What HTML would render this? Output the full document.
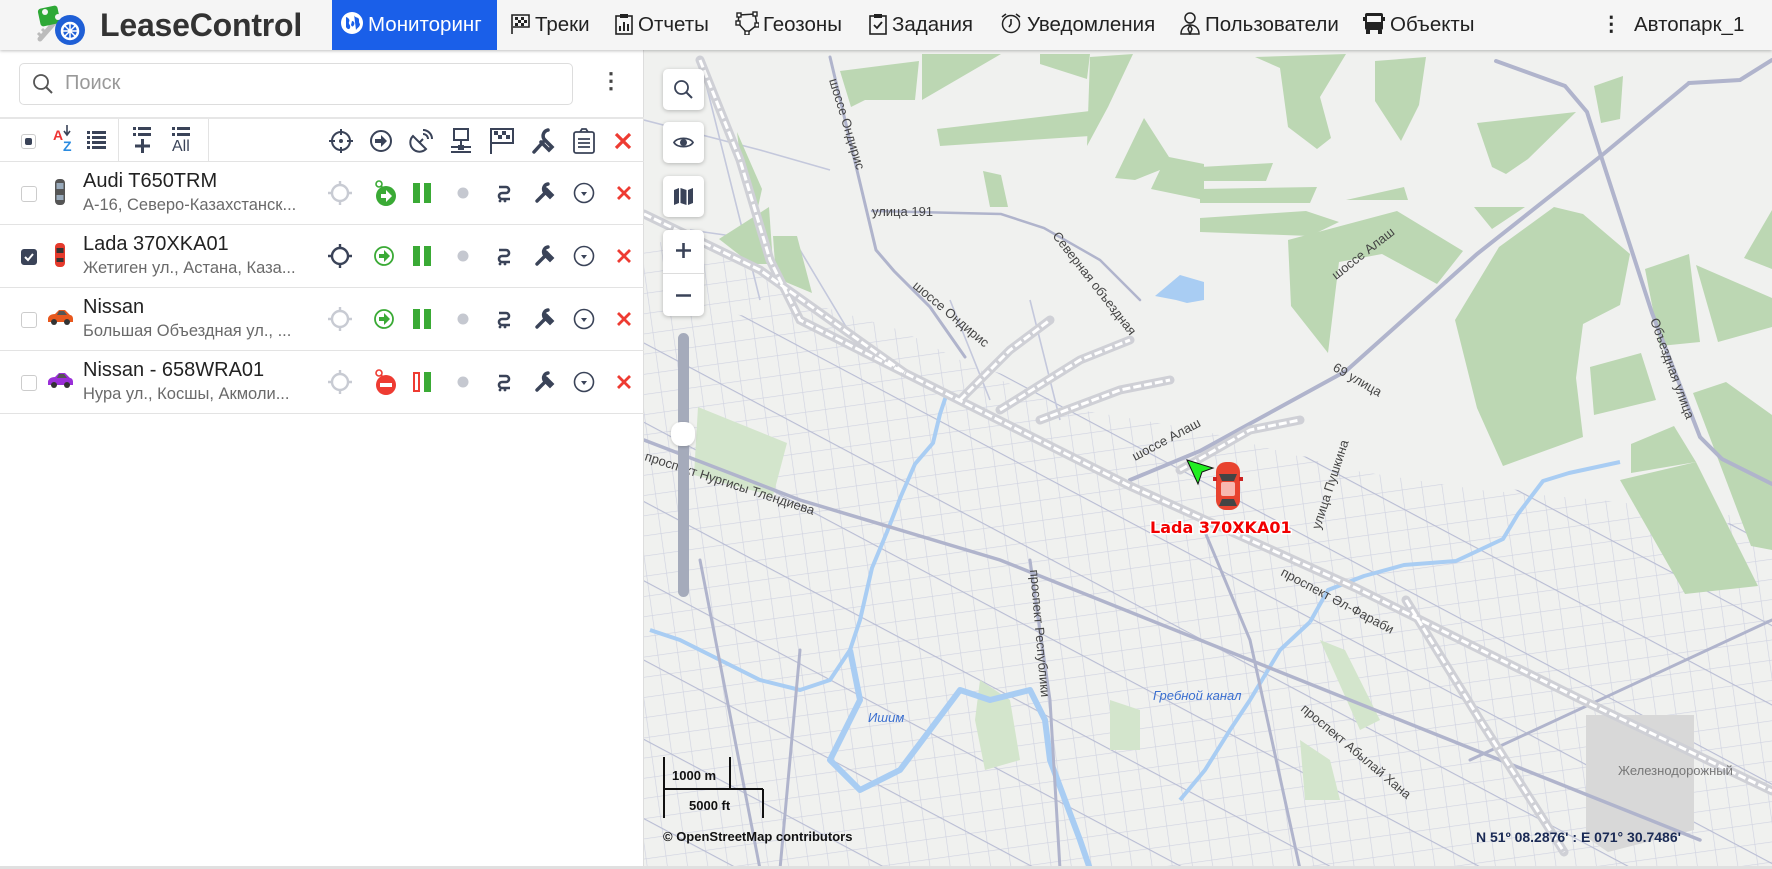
<!DOCTYPE html>
<html><head><meta charset="utf-8">
<style>
*{box-sizing:border-box;margin:0;padding:0}
body{width:1772px;height:869px;overflow:hidden;font-family:"Liberation Sans",Arial,sans-serif;background:#fff;position:relative}
.abs{position:absolute}
#hdr{left:0;top:0;width:1772px;height:50px;background:#f5f5f5;box-shadow:0 1px 3px rgba(0,0,0,.25);z-index:5}
.mi{position:absolute;top:0;height:50px;line-height:50px;font-size:20.5px;color:#222;white-space:nowrap}
.mi svg{vertical-align:-4px;margin-right:4px}
#side{left:0;top:50px;width:644px;height:819px;background:#fff;border-right:1px solid #ddd}
.row{position:absolute;left:0;width:644px;height:63px;border-bottom:1px solid #e3e3e3}
.cb{position:absolute;left:21px;top:24px;width:16px;height:16px;border:1px solid #ccc;border-radius:3px;background:#fff}
.nm{position:absolute;left:83px;top:8px;font-size:20px;color:#222}
.ad{position:absolute;left:83px;top:34px;font-size:16.5px;color:#6a6a6a}
#map{left:644px;top:50px;width:1128px;height:819px;background:#f0f1ef;overflow:hidden}
.btn{position:absolute;left:19px;width:41px;height:41px;background:#fff;border-radius:5px;box-shadow:0 1px 4px rgba(0,0,0,.25)}
.btn svg{position:absolute;left:10px;top:10px}
</style></head><body>

<div id="hdr" class="abs">
  <svg class="abs" style="left:32px;top:3px" width="56" height="44" viewBox="0 0 56 44">
    <path d="M8 36 L22 20" stroke="#bbb" stroke-width="5" stroke-linecap="round"/>
    <path d="M6 30 l4 4 M10 26 l4 4" stroke="#bbb" stroke-width="3"/>
    <rect x="7" y="4" width="20" height="18" rx="3" fill="#2ea836" transform="rotate(-12 17 13)"/>
    <circle cx="13" cy="9" r="3" fill="#f5f5f5"/>
    <circle cx="38" cy="27" r="15" fill="#1f5fd6"/>
    <circle cx="38" cy="28" r="8" fill="none" stroke="#fff" stroke-width="2.5"/>
    <path d="M38 20v16M30 28h16M32.5 22.5l11 11M43.5 22.5l-11 11" stroke="#fff" stroke-width="1.5"/>
    <circle cx="26" cy="14" r="3" fill="#f5f5f5"/>
  </svg>
  <div class="abs" style="left:100px;top:7px;font-size:32px;font-weight:bold;color:#333;letter-spacing:-.2px">LeaseControl</div>
  <div class="abs" style="left:332px;top:0;width:165px;height:50px;background:#1a5fe9"></div>
  <div class="mi" style="left:340px;color:#fff">
    <svg width="24" height="24" viewBox="0 0 24 24"><circle cx="12" cy="12" r="11" fill="#fff"/><path d="M6 6c3 1 4 3 3 5s2 3 1 6c-1 2-3 1-4-1M14 3c0 3 2 3 4 4s0 4 2 6c0 3-3 4-4 6" fill="#1a5fe9"/><path d="M12 10c2 0 3 2 2 4s-2 2-3 0" fill="#1a5fe9"/></svg>Мониторинг</div>
  <div class="mi" style="left:509px"><svg width="22" height="22" viewBox="0 0 22 22"><path d="M3 21V2h17v12H4" fill="none" stroke="#222" stroke-width="1.6"/><path d="M6 4h3v3H6zM12 4h3v3h-3zM9 7h3v3H9zM15 7h3v3h-3zM6 10h3v3H6zM12 10h3v3h-3z" fill="#222"/></svg>Треки</div>
  <div class="mi" style="left:614px"><svg width="20" height="22" viewBox="0 0 20 22"><rect x="2" y="3" width="16" height="18" fill="none" stroke="#222" stroke-width="1.6"/><rect x="6" y="1" width="8" height="4" fill="#222"/><path d="M6 18v-5M10 18V9M14 18v-7" stroke="#222" stroke-width="2"/></svg>Отчеты</div>
  <div class="mi" style="left:735px"><svg width="24" height="24" viewBox="0 0 24 24"><path d="M4 4L20 3L22 14L12 22L3 12Z" fill="none" stroke="#222" stroke-width="1.5"/><g fill="#fff" stroke="#222" stroke-width="1.4"><rect x="2" y="2" width="4" height="4"/><rect x="18" y="1" width="4" height="4"/><rect x="20" y="12" width="4" height="4"/><rect x="10" y="20" width="4" height="4"/><rect x="1" y="10" width="4" height="4"/></g></svg>Геозоны</div>
  <div class="mi" style="left:868px"><svg width="20" height="22" viewBox="0 0 20 22"><rect x="2" y="3" width="16" height="18" fill="none" stroke="#222" stroke-width="1.6"/><rect x="6" y="1" width="8" height="4" fill="#222"/><path d="M6 12l3 3 5-6" fill="none" stroke="#222" stroke-width="1.8"/></svg>Задания</div>
  <div class="mi" style="left:999px"><svg width="24" height="24" viewBox="0 0 24 24"><circle cx="12" cy="13" r="8.5" fill="none" stroke="#222" stroke-width="1.5"/><path d="M12 8v5l-2 3M3 6l4-3M21 6l-4-3" fill="none" stroke="#222" stroke-width="1.6"/></svg>Уведомления</div>
  <div class="mi" style="left:1179px"><svg width="22" height="24" viewBox="0 0 22 24"><circle cx="11" cy="7" r="5" fill="none" stroke="#222" stroke-width="1.5"/><path d="M2 23c0-6 4-9 9-9s9 3 9 9zM11 14l-2 4 2 5 2-5z" fill="none" stroke="#222" stroke-width="1.5"/></svg>Пользователи</div>
  <div class="mi" style="left:1362px"><svg width="24" height="24" viewBox="0 0 24 24"><rect x="3" y="2" width="18" height="17" rx="2" fill="#222"/><rect x="5" y="5" width="14" height="6" fill="#f5f5f5"/><rect x="4" y="19" width="4" height="4" fill="#222"/><rect x="16" y="19" width="4" height="4" fill="#222"/><rect x="1" y="6" width="2" height="4" fill="#222"/><rect x="21" y="6" width="2" height="4" fill="#222"/></svg>Объекты</div>
  <div class="mi" style="left:1601px;font-weight:bold">⋮</div>
  <div class="mi" style="left:1634px">Автопарк_1</div>
</div>

<div id="side" class="abs">
  <div class="abs" style="left:19px;top:13px;width:554px;height:42px;border:1px solid #ddd;border-radius:5px"></div>
  <svg class="abs" style="left:32px;top:23px" width="22" height="22" viewBox="0 0 22 22"><circle cx="9" cy="9" r="7" fill="none" stroke="#555" stroke-width="1.8"/><path d="M14 14l6 6" stroke="#555" stroke-width="2"/></svg>
  <div class="abs" style="left:65px;top:22px;font-size:20px;color:#999">Поиск</div>
  <div class="abs" style="left:600px;top:18px;font-size:22px;color:#444;font-weight:bold">⋮</div>
  <div class="abs" style="left:0;top:67px;width:644px;height:2px;background:#e6e6e6"></div>
  <div class="abs" style="left:0;top:69px;width:644px;height:43px;border-bottom:1px solid #e3e3e3"></div>
  <div class="abs" style="left:21px;top:84px;width:15px;height:15px;border:1px solid #ccc;border-radius:3px"></div>
  <div class="abs" style="left:25px;top:88px;width:7px;height:7px;border-radius:2px;background:#3a4358"></div>
  <div class="abs" style="left:53px;top:77px;font-size:14px;color:#e33;font-weight:bold">A</div>
  <div class="abs" style="left:63px;top:88px;font-size:14px;color:#2b8be0;font-weight:bold">Z</div>
  <svg class="abs" style="left:63px;top:75px" width="8" height="12"><path d="M4 0v9M1 6l3 4 3-4" stroke="#3a4358" stroke-width="1.6" fill="none"/></svg>
  <svg class="abs" style="left:87px;top:80px" width="20" height="20" viewBox="0 0 20 20"><g fill="#3a4358"><rect x="0" y="1" width="3" height="3"/><rect x="5" y="1" width="14" height="3"/><rect x="0" y="6" width="3" height="3"/><rect x="5" y="6" width="14" height="3"/><rect x="0" y="11" width="3" height="3"/><rect x="5" y="11" width="14" height="3"/><rect x="0" y="16" width="3" height="3"/><rect x="5" y="16" width="14" height="3"/></g></svg>
  <div class="abs" style="left:118px;top:69px;width:1px;height:43px;background:#e3e3e3"></div>
  <svg class="abs" style="left:133px;top:76px" width="20" height="28" viewBox="0 0 20 28"><g fill="#3a4358"><rect x="0" y="1" width="3" height="3"/><rect x="5" y="1" width="13" height="3"/><rect x="0" y="7" width="3" height="3"/><rect x="5" y="7" width="13" height="3"/><rect x="8" y="13" width="3" height="14"/><rect x="2" y="18.5" width="15" height="3"/></g></svg>
  <svg class="abs" style="left:172px;top:76px" width="20" height="12" viewBox="0 0 20 12"><g fill="#3a4358"><rect x="0" y="1" width="3" height="3"/><rect x="5" y="1" width="13" height="3"/><rect x="0" y="7" width="3" height="3"/><rect x="5" y="7" width="13" height="3"/></g></svg>
  <div class="abs" style="left:172px;top:88px;font-size:16px;color:#3a4358">All</div>
  <div class="abs" style="left:208px;top:69px;width:1px;height:43px;background:#e3e3e3"></div>
  <svg class="abs" style="left:328px;top:78px" width="26" height="26" viewBox="0 0 26 26"><circle cx="13" cy="13" r="9" fill="none" stroke="#3a4358" stroke-width="2"/><circle cx="13" cy="13" r="2" fill="#3a4358"/><path d="M13 1v6M13 19v6M1 13h6M19 13h6" stroke="#3a4358" stroke-width="2"/></svg>
  <svg class="abs" style="left:369px;top:79px" width="24" height="24" viewBox="0 0 24 24"><circle cx="12" cy="12" r="10" fill="none" stroke="#3a4358" stroke-width="2"/><path d="M6 10h6V6l6 6-6 6v-4H6z" fill="#3a4358"/></svg>
  <svg class="abs" style="left:408px;top:78px" width="26" height="26" viewBox="0 0 26 26"><path d="M5 8a9 9 0 0 0 13 13z" fill="none" stroke="#3a4358" stroke-width="2"/><path d="M11 15l4-4M15 6a5 5 0 0 1 5 5M15 2a9 9 0 0 1 9 9" fill="none" stroke="#3a4358" stroke-width="2"/></svg>
  <svg class="abs" style="left:449px;top:78px" width="24" height="26" viewBox="0 0 24 26"><rect x="5" y="1" width="14" height="11" fill="none" stroke="#3a4358" stroke-width="2"/><path d="M12 12v6M2 19h20M2 24h20" stroke="#3a4358" stroke-width="2"/><rect x="9" y="17" width="6" height="5" fill="#3a4358"/></svg>
  <svg class="abs" style="left:489px;top:77px" width="26" height="28" viewBox="0 0 26 28"><path d="M2 27V2h22v14H3" fill="none" stroke="#3a4358" stroke-width="2"/><path d="M5 4h4v4H5zM13 4h4v4h-4zM9 8h4v4H9zM17 8h4v4h-4z" fill="#3a4358"/></svg>
  <svg class="abs" style="left:531px;top:78px" width="24" height="26" viewBox="0 0 24 26"><path d="M3 24l10-11M17 2a6 6 0 0 0-4 9l8 8-3 3-8-8" fill="none" stroke="#3a4358" stroke-width="3.5" stroke-linecap="round"/></svg>
  <svg class="abs" style="left:572px;top:77px" width="24" height="28" viewBox="0 0 24 28"><rect x="2" y="5" width="20" height="21" rx="2" fill="none" stroke="#3a4358" stroke-width="1.8"/><path d="M8 5l2-3h4l2 3M6 12h12M6 16h12M6 20h12" fill="none" stroke="#3a4358" stroke-width="1.8"/></svg>
  <svg class="abs" style="left:614px;top:82px" width="18" height="18" viewBox="0 0 18 18"><path d="M2 2l14 14M16 2L2 16" stroke="#ee3b32" stroke-width="3.2"/></svg>

  <div class="row" style="top:112px">
    <div class="cb"></div>
    <svg class="abs" style="left:53px;top:16px" width="14" height="28" viewBox="0 0 14 28"><rect x="2" y="1" width="10" height="26" rx="4" fill="#555"/><rect x="3.5" y="5" width="7" height="6" fill="#9ab"/><rect x="3.5" y="17" width="7" height="5" fill="#9ab"/></svg>
    <div class="nm">Audi T650TRM</div><div class="ad">A-16, Северо-Казахстанск...</div>
  </div>
  <div class="row" style="top:175px">
    <div class="cb" style="background:#3a4358;border-color:#3a4358"><svg width="14" height="14" viewBox="0 0 14 14" style="position:absolute;left:0;top:0"><path d="M3 7l3 3 5-6" stroke="#fff" stroke-width="2" fill="none"/></svg></div>
    <svg class="abs" style="left:53px;top:17px" width="14" height="26" viewBox="0 0 14 26"><rect x="2" y="1" width="10" height="24" rx="4" fill="#e53a2c"/><rect x="3.5" y="6" width="7" height="5" fill="#333"/><rect x="3.5" y="16" width="7" height="4" fill="#333"/></svg>
    <div class="nm">Lada 370XKA01</div><div class="ad">Жетиген ул., Астана, Каза...</div>
  </div>
  <div class="row" style="top:238px">
    <div class="cb"></div>
    <svg class="abs" style="left:47px;top:20px" width="26" height="18" viewBox="0 0 26 18"><path d="M1 11c0-3 3-5 7-5l4-4h6l5 5c2 0 3 2 3 4v3H1z" fill="#e8581e"/><circle cx="7" cy="14" r="3" fill="#333"/><circle cx="20" cy="14" r="3" fill="#333"/><path d="M12 3h5l3 4h-10z" fill="#555"/></svg>
    <div class="nm">Nissan</div><div class="ad">Большая Объездная ул., ...</div>
  </div>
  <div class="row" style="top:301px">
    <div class="cb"></div>
    <svg class="abs" style="left:47px;top:20px" width="26" height="18" viewBox="0 0 26 18"><path d="M1 11c0-3 3-5 7-5l4-4h6l5 5c2 0 3 2 3 4v3H1z" fill="#9a2fd8"/><circle cx="7" cy="14" r="3" fill="#333"/><circle cx="20" cy="14" r="3" fill="#333"/><path d="M12 3h5l3 4h-10z" fill="#555"/></svg>
    <div class="nm">Nissan - 658WRA01</div><div class="ad">Нура ул., Косшы, Акмоли...</div>
  </div>
</div>

<svg class="abs" style="left:0;top:0;z-index:3" width="644" height="420" viewBox="0 0 644 420">
  <defs>
    <g id="tgt"><circle cx="0" cy="0" r="8" fill="none" stroke-width="2.4"/><path d="M0-12v5M0 7v5M-12 0h5M7 0h5" stroke-width="2.4"/></g>
    <g id="pause"><rect x="-9" y="-10" width="7" height="20" fill="#3aaa35"/><rect x="2" y="-10" width="7" height="20" fill="#3aaa35"/></g>
    <g id="sig"><path d="M-5-6h7a3 3 0 0 1 0 6h-4a3 3 0 0 0 0 6h8" fill="none" stroke="#3a4358" stroke-width="2.6"/><circle cx="-4" cy="8" r="1.4" fill="#3a4358"/><circle cx="1" cy="8" r="1.4" fill="#3a4358"/></g>
    <g id="wr"><path d="M-7 8l8-8M4-9a5 5 0 0 0-4 7l6 6 2-2-6-6" fill="none" stroke="#3a4358" stroke-width="3.4" stroke-linecap="round"/></g>
    <g id="dd"><circle r="9.5" fill="none" stroke="#3a4358" stroke-width="1.6"/><path d="M-3-1h6l-3 4z" fill="#3a4358"/></g>
    <g id="x"><path d="M-6-6l12 12M6-6l-12 12" stroke="#ee3b32" stroke-width="2.8"/></g>
    <g id="arr"><path d="M-5-2h5v-4l6 6-6 6v-4h-5z"/></g>
  </defs>
  <use href="#tgt" x="340" y="193" stroke="#c8cbd3"/>
  <circle cx="386" cy="196" r="10" fill="#3aaa35"/><use href="#arr" x="386" y="196" fill="#fff"/>
  <circle cx="379" cy="184" r="3" fill="none" stroke="#3aaa35" stroke-width="1.6"/><path d="M381 186l3 3" stroke="#3aaa35" stroke-width="1.6"/>
  <use href="#pause" x="422" y="193"/>
  <circle cx="463" cy="193" r="5.5" fill="#c5c8d0"/>
  <use href="#sig" x="504" y="193"/><use href="#wr" x="544" y="193"/><use href="#dd" x="584" y="193"/><use href="#x" x="624" y="193"/>
  <use href="#tgt" x="340" y="256" stroke="#3a4358"/>
  <circle cx="384" cy="256" r="9" fill="none" stroke="#3aaa35" stroke-width="1.8"/><use href="#arr" x="384" y="256" fill="#3aaa35"/>
  <use href="#pause" x="422" y="256"/>
  <circle cx="463" cy="256" r="5.5" fill="#c5c8d0"/>
  <use href="#sig" x="504" y="256"/><use href="#wr" x="544" y="256"/><use href="#dd" x="584" y="256"/><use href="#x" x="624" y="256"/>
  <use href="#tgt" x="340" y="319" stroke="#c8cbd3"/>
  <circle cx="384" cy="319" r="9" fill="none" stroke="#3aaa35" stroke-width="1.8"/><use href="#arr" x="384" y="319" fill="#3aaa35"/>
  <use href="#pause" x="422" y="319"/>
  <circle cx="463" cy="319" r="5.5" fill="#c5c8d0"/>
  <use href="#sig" x="504" y="319"/><use href="#wr" x="544" y="319"/><use href="#dd" x="584" y="319"/><use href="#x" x="624" y="319"/>
  <use href="#tgt" x="340" y="382" stroke="#c8cbd3"/>
  <circle cx="386" cy="385" r="10" fill="#ee3b32"/><rect x="380" y="383" width="12" height="4" fill="#fff"/>
  <circle cx="379" cy="373" r="3" fill="none" stroke="#ee3b32" stroke-width="1.6"/><path d="M381 375l3 3" stroke="#ee3b32" stroke-width="1.6"/>
  <rect x="413" y="372" width="7" height="20" fill="#ee3b32"/><rect x="415" y="374" width="3" height="16" fill="#fff"/><rect x="424" y="372" width="7" height="20" fill="#3aaa35"/>
  <circle cx="463" cy="382" r="5.5" fill="#c5c8d0"/>
  <use href="#sig" x="504" y="382"/><use href="#wr" x="544" y="382"/><use href="#dd" x="584" y="382"/><use href="#x" x="624" y="382"/>
</svg>

<div id="map" class="abs">
<svg width="1128" height="819" viewBox="644 50 1128 819" style="position:absolute;left:0;top:0">
  <defs>
    <pattern id="grid" width="20" height="20" patternUnits="userSpaceOnUse" patternTransform="rotate(-8)">
      <path d="M0 0H20M0 0V20" stroke="#c8cbdd" stroke-width="1.3" fill="none"/>
    </pattern>
    <pattern id="grid2" width="70" height="70" patternUnits="userSpaceOnUse" patternTransform="rotate(28)">
      <path d="M0 0H70" stroke="#b9bdd4" stroke-width="2.2" fill="none"/>
    </pattern>
  </defs>
  <path d="M644 240L720 250L800 300L900 330L1000 380L1080 410L1200 430L1350 470L1480 490L1600 500L1772 520V869H644Z" fill="url(#grid)" opacity=".8"/>
  <path d="M644 300L900 340L1200 440L1772 530V869H644Z" fill="url(#grid2)"/>
  <path d="M644 120L760 150L830 170M690 230L760 240M700 60L760 300M800 250L860 350M950 300L990 400M1030 300L1060 420" stroke="#c4c8dc" stroke-width="1.6" fill="none"/>
  <g fill="#bcd7b3">
    <path d="M840 71L919 61L915 100L865 100L851 107Z"/>
    <path d="M922 54L1001 54L922 100Z"/>
    <path d="M937 129L1090 111L1090 136L940 146Z"/>
    <path d="M1040 54L1090 54L1087 79L1040 64Z"/>
    <path d="M1090 57L1133 54L1108 107L1087 146Z"/>
    <path d="M1115 178L1144 118L1169 157L1204 164L1204 200L1151 189L1160 170L1135 180Z"/>
    <path d="M983 171L1001 175L1008 207L990 207Z"/>
    <path d="M737 132L762 189L758 207L740 157Z"/>
    <path d="M719 239L769 207L773 264L751 264Z"/>
    <path d="M773 236L797 236L812 293L776 278Z"/>
    <path d="M1255 57L1346 54L1320 97L1331 138L1317 149L1288 127L1280 68Z"/>
    <path d="M1375 61L1426 57L1419 105L1401 141L1375 101Z"/>
    <path d="M1477 123L1576 112L1528 159L1506 174L1492 167Z"/>
    <path d="M1594 86L1623 76L1620 119L1601 123Z"/>
    <path d="M1455 320L1499 247L1554 207L1583 214L1630 254L1620 305L1583 324L1576 378L1583 437L1503 466L1477 408Z"/>
    <path d="M1645 269L1689 254L1700 342L1660 346Z"/>
    <path d="M1696 265L1772 298L1772 327L1718 342Z"/>
    <path d="M1744 258L1772 210L1772 269Z"/>
    <path d="M1590 367L1641 353L1656 400L1594 415Z"/>
    <path d="M1631 444L1674 426L1696 462L1631 473Z"/>
    <path d="M1620 480L1696 462L1758 586L1685 594Z"/>
    <path d="M1693 393L1726 382L1772 415L1772 550L1751 546Z"/>
    <path d="M1200 167L1273 163L1266 181L1200 181Z"/>
    <path d="M1200 189L1317 187L1310 203L1200 203Z"/>
    <path d="M1200 218L1306 211L1339 222L1310 236L1200 232Z"/>
    <path d="M1288 240L1397 211L1463 251L1437 284L1382 254L1339 262L1328 353L1291 306Z"/>
    <path d="M1346 200L1404 187L1408 200Z"/>
    <path d="M1474 207L1525 207L1492 229Z"/>
  </g>
  <g fill="#d3e5cc">
    <path d="M698 407L787 443L773 496L694 475Z"/>
    <path d="M980 680L1010 700L1020 760L985 770L975 720Z"/>
    <path d="M1320 640L1345 650L1380 720L1360 730Z"/>
    <path d="M1300 740L1330 760L1340 800L1305 800Z"/>
    <path d="M1110 700L1140 710L1140 750L1110 750Z"/>
  </g>
  <path d="M1586 715L1694 715L1694 830L1608 852L1586 837Z" fill="#d8d8d8"/>
  <path d="M1155 296L1180 275L1204 282L1204 300L1187 303L1176 300Z" fill="#a9cdf3"/>
  <g fill="none" stroke="#a9cdf3" stroke-width="4" stroke-linejoin="round">
    <path d="M947 393L940 414L933 443L915 464L901 496L887 532L872 568L860 620L850 650L830 680L800 690L760 680L720 660L680 640L650 630"/>
    <path d="M850 650L860 700L840 740L830 760L860 790L900 770L930 730L960 690L990 700L1030 690L1045 720L1050 760L1065 800L1080 840L1090 869" stroke-width="6"/>
    <path d="M1310 622L1328 590L1364 576L1404 565L1456 561L1503 539L1518 514L1543 481L1569 473L1620 462"/>
    <path d="M1310 622L1280 650L1250 700L1230 730L1205 770L1180 800"/>
  </g>
  <g fill="none" stroke="#b0b4cc" stroke-width="4" stroke-linecap="round">
    <path d="M1689 83L1601 156L1477 254L1346 371L1200 451L1130 480"/>
    <path d="M1496 61L1565 86L1587 112L1601 156L1652 313L1700 437L1722 459L1772 484"/>
    <path d="M1772 60L1740 80L1689 83"/>
    <path d="M830 57L876 250L894 271L930 307L965 357" stroke-width="3"/>
    <path d="M872 211L1001 214L1044 228L1100 260L1140 300" stroke-width="2.5"/>
    <path d="M644 440L800 500L1000 560L1200 640L1400 720L1600 800L1700 840" stroke-width="3.5"/>
    <path d="M1030 560L1050 700L1060 869M1200 520L1250 640L1300 869M1470 760L1772 620" stroke-width="3"/>
    <path d="M800 650L780 869M700 560L760 869" stroke-width="3"/>
  </g>
  <g fill="none" stroke="#cfd0d6" stroke-width="9" stroke-linecap="round">
    <path d="M644 214L760 270L905 373L1130 486L1356 588L1582 700L1772 791"/>
    <path d="M700 60L740 160L770 260L800 320L905 373"/>
    <path d="M1406 600L1480 720L1564 852"/>
    <path d="M960 400L1010 350L1050 320M1000 410L1080 360L1130 340M1040 420L1120 390L1170 380M1180 470L1250 430L1300 420"/>
  </g>
  <g fill="none" stroke="#fff" stroke-width="3" stroke-dasharray="8 3">
    <path d="M644 214L760 270L905 373L1130 486L1356 588L1582 700L1772 791"/>
    <path d="M700 60L740 160L770 260L800 320L905 373"/>
    <path d="M1406 600L1480 720L1564 852"/>
    <path d="M960 400L1010 350L1050 320M1000 410L1080 360L1130 340M1040 420L1120 390L1170 380M1180 470L1250 430L1300 420"/>
  </g>
  <g font-family="Liberation Sans,sans-serif" font-size="13" fill="#444">
    <text x="872" y="216">улица 191</text>
    <text transform="translate(829 80) rotate(73)">шоссе Ондирис</text>
    <text transform="translate(1052 236) rotate(52)">Северная объездная</text>
    <text transform="translate(912 287) rotate(40)">шоссе Ондирис</text>
    <text transform="translate(1336 280) rotate(-38)">шоссе Алаш</text>
    <text transform="translate(1135 461) rotate(-28)">шоссе Алаш</text>
    <text transform="translate(1332 370) rotate(30)">69 улица</text>
    <text transform="translate(1320 530) rotate(-72)">улица Пушкина</text>
    <text transform="translate(1650 320) rotate(70)">Объездная улица</text>
    <text transform="translate(644 460) rotate(18)">проспект Нургисы Тлендиева</text>
    <text transform="translate(1030 570) rotate(85)">проспект Республики</text>
    <text transform="translate(1280 575) rotate(28)">проспект Әл-Фараби</text>
    <text transform="translate(1300 710) rotate(40)">проспект Абылай Хана</text>
    <text x="1618" y="775" fill="#777">Железнодорожный</text>
    <text x="868" y="722" fill="#3a6fd0" font-style="italic">Ишим</text>
    <text x="1153" y="700" fill="#3a6fd0" font-style="italic">Гребной канал</text>
  </g>
  <path d="M1187 460L1213 468L1202 472L1198 484Z" fill="#22ee22" stroke="#111" stroke-width="1"/>
  <g transform="translate(1228 486)">
    <rect x="-12" y="-24" width="24" height="48" rx="10" fill="#e8432f"/>
    <rect x="-15" y="-9" width="4" height="4" fill="#c22"/><rect x="11" y="-9" width="4" height="4" fill="#c22"/>
    <path d="M-9-12h18l-3 7h-12z" fill="#444"/>
    <rect x="-7" y="-4" width="14" height="14" rx="2" fill="#f8b8b0"/>
    <path d="M-9 20h18l-3-7h-12z" fill="#444"/>
  </g>
  <text x="1150" y="533" font-family="DejaVu Sans,sans-serif" font-weight="bold" font-size="16" fill="#f20000" stroke="#fff" stroke-width="3" paint-order="stroke">Lada 370XKA01</text>
  <g stroke="#111" stroke-width="2" fill="none">
    <path d="M664 757V818M664 789H763M730 757V789M763 789V818"/>
  </g>
  <g font-family="Liberation Sans,sans-serif" font-size="13" font-weight="bold" fill="#111">
    <text x="672" y="780">1000 m</text>
    <text x="689" y="810">5000 ft</text>
    <text x="663" y="841">© OpenStreetMap contributors</text>
    <text x="1476" y="842" fill="#1a2a55" font-size="14">N 51º 08.2876' : E 071° 30.7486'</text>
  </g>
</svg>
  <div class="btn" style="top:19px"><svg width="21" height="21" viewBox="0 0 21 21"><circle cx="8.5" cy="8.5" r="6.5" fill="none" stroke="#3a4358" stroke-width="1.8"/><path d="M13 13l6 6" stroke="#3a4358" stroke-width="2"/></svg></div>
  <div class="btn" style="top:72px"><svg width="21" height="21" viewBox="0 0 21 21"><path d="M1 10.5C4 5 17 5 20 10.5C17 16 4 16 1 10.5Z" fill="none" stroke="#3a4358" stroke-width="1.8"/><circle cx="10.5" cy="10.5" r="3.5" fill="#3a4358"/></svg></div>
  <div class="btn" style="top:126px"><svg width="21" height="21" viewBox="0 0 21 21"><path d="M1 4l5-2v15l-5 2zM7.5 2l6 2v15l-6-2zM15 4l5-2v15l-5 2z" fill="#3a4358"/></svg></div>
  <div class="btn" style="top:180px;height:86px">
    <div style="position:absolute;left:0;top:43px;width:41px;height:1px;background:#ddd"></div>
    <svg width="21" height="66" viewBox="0 0 21 66"><path d="M10.5 3v15M3 10.5h15M3 55.5h15" stroke="#3a4358" stroke-width="2.6"/></svg>
  </div>
  <div class="abs" style="left:34px;top:283px;width:11px;height:264px;border-radius:6px;background:#a5abbb"></div>
  <div class="abs" style="left:27px;top:372px;width:24px;height:24px;border-radius:10px;background:#fff;box-shadow:0 1px 3px rgba(0,0,0,.2)"></div>
</div>
<div class="abs" style="left:0;top:866px;width:1772px;height:3px;background:#e0e0e0"></div>
</body></html>
